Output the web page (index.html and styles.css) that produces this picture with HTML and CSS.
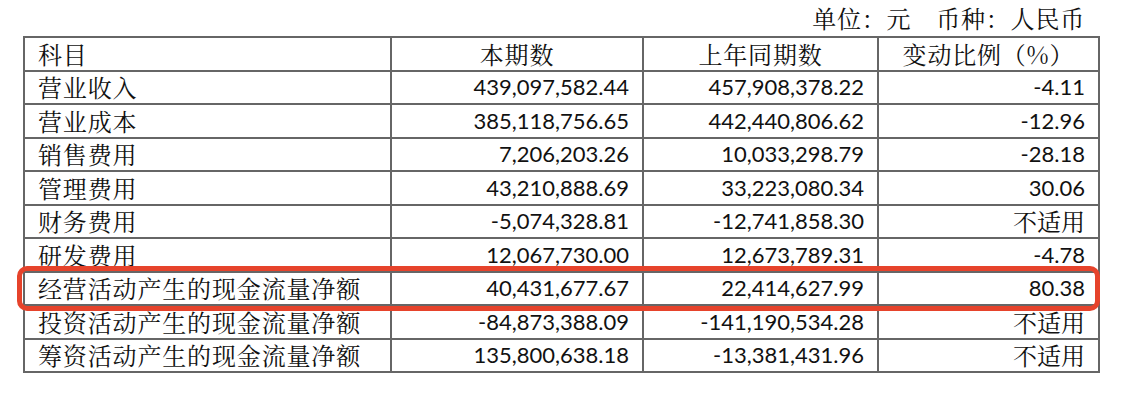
FILE: index.html
```html
<!DOCTYPE html>
<html lang="zh-CN">
<head>
<meta charset="utf-8">
<title>财务数据</title>
<link rel="stylesheet" href="styles.css">
</head>
<body>
<div class="page">
  <div class="caption">单位：元　币种：人民币</div>
  <div class="table-wrap">
    <table class="fin">
      <colgroup>
        <col class="c1"><col class="c2"><col class="c3"><col class="c4">
      </colgroup>
      <tr class="head">
        <td class="label">科目</td>
        <td class="center">本期数</td>
        <td class="center">上年同期数</td>
        <td class="center">变动比例（%）</td>
      </tr>
      <tr><td class="label">营业收入</td><td class="num">439,097,582.44</td><td class="num">457,908,378.22</td><td class="num">-4.11</td></tr>
      <tr><td class="label">营业成本</td><td class="num">385,118,756.65</td><td class="num">442,440,806.62</td><td class="num">-12.96</td></tr>
      <tr><td class="label">销售费用</td><td class="num">7,206,203.26</td><td class="num">10,033,298.79</td><td class="num">-28.18</td></tr>
      <tr><td class="label">管理费用</td><td class="num">43,210,888.69</td><td class="num">33,223,080.34</td><td class="num">30.06</td></tr>
      <tr><td class="label">财务费用</td><td class="num">-5,074,328.81</td><td class="num">-12,741,858.30</td><td class="na">不适用</td></tr>
      <tr><td class="label">研发费用</td><td class="num">12,067,730.00</td><td class="num">12,673,789.31</td><td class="num">-4.78</td></tr>
      <tr><td class="label">经营活动产生的现金流量净额</td><td class="num">40,431,677.67</td><td class="num">22,414,627.99</td><td class="num">80.38</td></tr>
      <tr><td class="label">投资活动产生的现金流量净额</td><td class="num">-84,873,388.09</td><td class="num">-141,190,534.28</td><td class="na">不适用</td></tr>
      <tr><td class="label">筹资活动产生的现金流量净额</td><td class="num">135,800,638.18</td><td class="num">-13,381,431.96</td><td class="na">不适用</td></tr>
    </table>
    <div class="highlight"></div>
  </div>
</div>
</body>
</html>
```

FILE: styles.css
```css
html, body {
  margin: 0;
  padding: 0;
  background: #ffffff;
}

body {
  font-family: "Noto Serif CJK SC", "Noto Sans CJK SC", sans-serif;
  color: #111;
}

.page {
  padding-left: 23px;
  width: 1074px;
}

.caption {
  height: 36px;
  line-height: 36px;
  text-align: right;
  padding-right: 12px;
  font-size: 24px;
  letter-spacing: 0.8px;
  font-weight: 400;
}

.table-wrap {
  position: relative;
}

.fin {
  border-collapse: collapse;
  table-layout: fixed;
  width: 1075px;
}

.c1 { width: 367px; }
.c2 { width: 252px; }
.c3 { width: 235px; }
.c4 { width: 221px; }

.fin td {
  border: 2px solid #666666;
  height: 31.5px;
  padding: 0 13px 0 13px;
  vertical-align: middle;
  white-space: nowrap;
  line-height: 1;
}

.label {
  font-size: 24px;
  letter-spacing: 0.85px;
  font-weight: 400;
  text-align: left;
}

.center {
  font-size: 24px;
  letter-spacing: 0.8px;
  font-weight: 400;
  text-align: center;
}

.num {
  font-family: "Lato", "Noto Sans CJK SC", sans-serif;
  font-size: 22px;
  text-align: right;
}

.na {
  font-size: 24px;
  font-weight: 400;
  text-align: right;
}

.highlight {
  position: absolute;
  left: -6px;
  top: 230px;
  width: 1073px;
  height: 35px;
  border: 5px solid #e6432b;
  border-radius: 10px;
  pointer-events: none;
}
```
